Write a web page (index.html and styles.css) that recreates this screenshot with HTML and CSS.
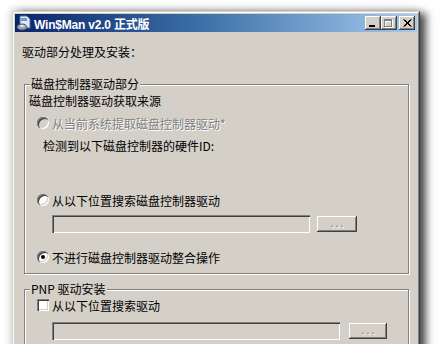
FILE: index.html
```html
<!DOCTYPE html>
<html lang="zh-CN">

<head>
    <meta charset="UTF-8">
    <title>Win$Man v2.0 正式版</title>
    <link rel="stylesheet" href="styles.css">
</head>

<body>
    <div class="desk">
        <div class="window">
            <div class="frame">
                <div class="titlebar">
                    <svg class="app-icon" viewBox="0 0 16 16">
                        <path d="M4 1h7l3 3v9H4z" fill="#dfe9f5" stroke="#4a6f9c"/>
                        <path d="M5 3h6v3H5z" fill="#6d9ad0"/>
                        <ellipse cx="6" cy="12" rx="5" ry="3" fill="#9aa6b4" stroke="#4d5866"/>
                        <ellipse cx="6" cy="11" rx="2" ry="1" fill="#e8eef5"/>
                    </svg>
                    <span class="title">Win$Man v2.0 正式版</span>
                    <div class="caption-btns">
                        <span class="cbtn">
                            <svg width="8" height="8" viewBox="0 0 8 8"><path d="M0 6h6v2H0z" fill="#000"/></svg>
                        </span>
                        <span class="cbtn">
                            <svg width="10" height="9" viewBox="0 0 10 9">
                                <path d="M1 1h8v8H1zM2 3v5h6V3z" fill="#fff" fill-rule="evenodd"/>
                                <path d="M0 0h8v8H0zM1 2v5h6V2z" fill="#808080" fill-rule="evenodd"/>
                            </svg>
                        </span>
                        <span class="cbtn close">
                            <svg width="9" height="8" viewBox="0 0 9 8"><path d="M0.5 0.5l7 7M1.5 0.5l7 7M7.5 0.5l-7 7M8.5 0.5l-7 7" stroke="#000" stroke-width="1"/></svg>
                        </span>
                    </div>
                </div>

                <div class="pane">
                    <p class="heading">驱动部分处理及安装：</p>

                    <fieldset class="group">
                        <legend>磁盘控制器驱动部分</legend>
                        <p class="sub">磁盘控制器驱动获取来源</p>
                        <label class="opt disabled r1"><span class="radio"></span>从当前系统提取磁盘控制器驱动*</label>
                        <p class="hwid">检测到以下磁盘控制器的硬件ID:</p>
                        <label class="opt r2"><span class="radio"></span>从以下位置搜索磁盘控制器驱动</label>
                        <div class="path-row">
                            <span class="path"></span>
                            <span class="browse">. . .</span>
                        </div>
                        <label class="opt r3"><span class="radio checked"></span>不进行磁盘控制器驱动整合操作</label>
                    </fieldset>

                    <fieldset class="group pnp">
                        <legend>PNP 驱动安装</legend>
                        <label class="opt c1"><span class="check"></span>从以下位置搜索驱动</label>
                        <div class="path-row">
                            <span class="path wide"></span>
                            <span class="browse narrow">. . .</span>
                        </div>
                    </fieldset>
                </div>
            </div>
        </div>
    </div>
</body>

</html>
```

FILE: styles.css
```css
* {
    margin: 0;
    padding: 0;
    box-sizing: border-box;
}
body {
    background: #fff;
    font-family: "Noto Sans CJK SC", "Liberation Sans", sans-serif;
    font-size: 12px;
    color: #000;
    overflow: hidden;
}
.desk {
    padding: 11px 0 0 12px;
    height: 344px;
}
.window {
    width: 408px;
    height: 350px;
    background: #d4d0c8;
    border: 1px solid;
    border-color: #d4d0c8 #404040 #404040 #d4d0c8;
    box-shadow: 6px 2px 8px rgba(0, 0, 0, 0.7), -2px -2px 7px rgba(0, 0, 0, 0.15);
}
.frame {
    height: 100%;
    border: 1px solid;
    border-color: #fff #808080 #808080 #fff;
    padding: 1px;
}

/* title bar */
.titlebar {
    height: 18px;
    display: flex;
    align-items: center;
    padding: 0 2px 0 1px;
    background: linear-gradient(to right, #0a246a, #3a6ea5 45%, #a6caf0);
}
.app-icon {
    width: 16px;
    height: 16px;
    flex: none;
}
.title {
    margin-left: 2px;
    color: #fff;
    font-family: "Liberation Sans", "Noto Sans CJK SC", sans-serif;
    font-weight: 700;
    font-size: 12px;
    letter-spacing: -0.2px;
}
.caption-btns {
    margin-left: auto;
    display: flex;
}
.cbtn {
    width: 16px;
    height: 14px;
    display: flex;
    align-items: center;
    justify-content: center;
    background: #d4d0c8;
    box-shadow: inset -1px -1px #404040, inset 1px 1px #fff, inset -2px -2px #808080;
}
.close {
    margin-left: 2px;
}

/* dialog body */
.pane {
    padding: 13px 7px 0 7px;
}
.heading {
    line-height: 14px;
}
.group {
    margin: 18px 1px 0 2px;
    padding: 0 0 8px 4px;
    min-width: 0;
    border: 1px solid #808080;
    box-shadow: inset 1px 1px #fff, 1px 1px #fff;
}
.group legend {
    margin-left: 1px;
    padding: 0 1px;
    line-height: 14px;
    background: #d4d0c8;
}
.sub {
    margin-top: 3px;
    line-height: 14px;
}
.opt {
    display: flex;
    align-items: center;
    height: 16px;
    margin-left: 8px;
    gap: 3px;
}
.r1 {
    margin-top: 7px;
}
.r2 {
    margin-top: 39px;
}
.r3 {
    margin-top: 16px;
}
.disabled {
    color: #808080;
    text-shadow: 1px 1px #fff;
}
.hwid {
    margin: 8px 0 0 14px;
    line-height: 14px;
}
.radio {
    position: relative;
    width: 12px;
    height: 12px;
    border-radius: 50%;
    background: #fff;
    box-shadow: inset 1px 1px #808080, inset 2px 2px #404040, inset -1px -1px #fff, inset -2px -2px #d4d0c8;
}
.disabled .radio {
    background: #d4d0c8;
}
.checked::after {
    content: "";
    position: absolute;
    left: 4px;
    top: 4px;
    width: 4px;
    height: 4px;
    border-radius: 50%;
    background: #000;
}
.check {
    width: 12px;
    height: 12px;
    background: #fff;
    box-shadow: inset 1px 1px #808080, inset 2px 2px #404040, inset -1px -1px #fff, inset -2px -2px #d4d0c8;
}
.path-row {
    display: flex;
    align-items: center;
    margin: 7px 0 0 23px;
    height: 18px;
}
.path {
    width: 258px;
    height: 18px;
    background: #d4d0c8;
    box-shadow: inset 1px 1px #808080, inset 2px 2px #404040, inset -1px -1px #fff, inset -2px -2px #d4d0c8;
}
.path.wide {
    width: 288px;
}
.browse {
    width: 40px;
    height: 16px;
    margin-left: 7px;
    display: flex;
    align-items: center;
    justify-content: center;
    font-family: "Liberation Sans", sans-serif;
    font-size: 9px;
    font-weight: 700;
    color: #808080;
    text-shadow: 1px 1px #fff;
    background: #d4d0c8;
    box-shadow: inset -1px -1px #404040, inset 1px 1px #fff, inset -2px -2px #808080;
}
.browse.narrow {
    width: 38px;
    margin-left: 9px;
}
.pnp {
    margin-top: 8px;
}
.c1 {
    margin-top: 1px;
}
.pnp .path-row {
    margin-top: 9px;
}
```
